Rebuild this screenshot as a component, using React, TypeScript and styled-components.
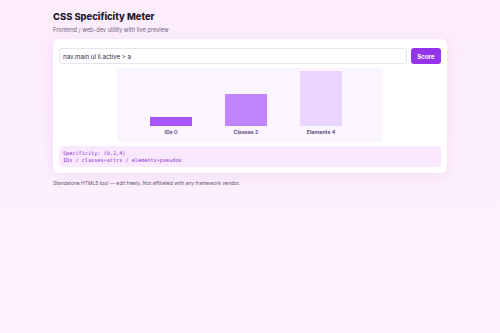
import styled, { createGlobalStyle } from "styled-components";

const GlobalStyle = createGlobalStyle`
  html, body {
    margin: 0;
    padding: 0;
    min-height: 100%;
  }
  body {
    background: linear-gradient(180deg, #fcecfc 0%, #fdf3fe 100%);
    min-height: 333px;
    font-family: Inter, "Noto Sans", "Liberation Sans", sans-serif;
  }
`;

const Wrapper = styled.div`
  width: 394px;
  margin: 0 auto;
  padding-top: 11px;
`;

const Title = styled.h1`
  margin: 0;
  font-size: 9.4px;
  line-height: 12px;
  font-weight: 800;
  color: #1f1a2e;
`;

const Subtitle = styled.p`
  margin: 2px 0 0;
  font-size: 5.7px;
  line-height: 9px;
  color: #6e5e80;
`;

const Card = styled.div`
  margin-top: 5px;
  background: #ffffff;
  border-radius: 6px;
  padding: 9px 6px 6px;
  box-shadow: 0 4px 14px rgba(170, 90, 200, 0.12);
  display: flex;
  flex-direction: column;
  gap: 4px;
`;

const InputRow = styled.div`
  display: flex;
  gap: 4px;
`;

const Input = styled.input`
  flex: 1;
  height: 16px;
  box-sizing: border-box;
  border: 1px solid #e8e4ee;
  border-radius: 3px;
  padding: 0 3px;
  font-family: inherit;
  font-size: 6.2px;
  color: #2a2438;
  outline: none;
`;

const Button = styled.button`
  width: 30px;
  height: 16px;
  border: none;
  border-radius: 3px;
  background: #9333ea;
  color: #ffffff;
  font-family: inherit;
  font-size: 6.2px;
  font-weight: 700;
  padding: 0;
`;

const Chart = styled.div`
  width: 266px;
  height: 74px;
  box-sizing: border-box;
  margin: 0 auto;
  background: #faf5ff;
  border-radius: 4px;
  padding: 0 0 6px 33px;
  display: flex;
  align-items: flex-end;
  gap: 33px;
`;

const Column = styled.div`
  width: 42px;
  display: flex;
  flex-direction: column;
  align-items: center;
`;

const Bar = styled.div<{ $color: string }>`
  width: 42px;
  background: ${(p) => p.$color};
`;

const BarLabel = styled.div`
  margin-top: 2px;
  font-size: 5.3px;
  line-height: 8px;
  font-weight: 600;
  color: #553d78;
  white-space: nowrap;
`;

const Code = styled.div`
  background: #fae8ff;
  border-radius: 4px;
  padding: 3.5px 4px;
  font-family: "DejaVu Sans Mono", "Liberation Mono", monospace;
  font-size: 5.2px;
  line-height: 7px;
  color: #8b2fc9;
`;

const Footer = styled.p`
  margin: 6px 0 0;
  font-size: 5px;
  line-height: 8px;
  color: #5e5670;
`;

const bars = [
  { label: "IDs", value: 0, color: "#a855f7" },
  { label: "Classes", value: 2, color: "#c084fc" },
  { label: "Elements", value: 4, color: "#e9d5ff" },
];

const App = () => {
  return (
    <>
      <GlobalStyle />
      <Wrapper>
        <Title>CSS Specificity Meter</Title>
        <Subtitle>Frontend / web-dev utility with live preview</Subtitle>
        <Card>
          <InputRow>
            <Input defaultValue="nav.main ul li.active > a" />
            <Button>Score</Button>
          </InputRow>
          <Chart>
            {bars.map((b) => (
              <Column key={b.label}>
                <Bar $color={b.color} style={{ height: 9 + b.value * 11.5 }} />
                <BarLabel>
                  {b.label} {b.value}
                </BarLabel>
              </Column>
            ))}
          </Chart>
          <Code>
            Specificity: (0,2,4)
            <br />
            IDs / classes+attrs / elements+pseudos
          </Code>
        </Card>
        <Footer>Standalone HTML5 tool — edit freely. Not affiliated with any framework vendor.</Footer>
      </Wrapper>
    </>
  );
};

export default App;
